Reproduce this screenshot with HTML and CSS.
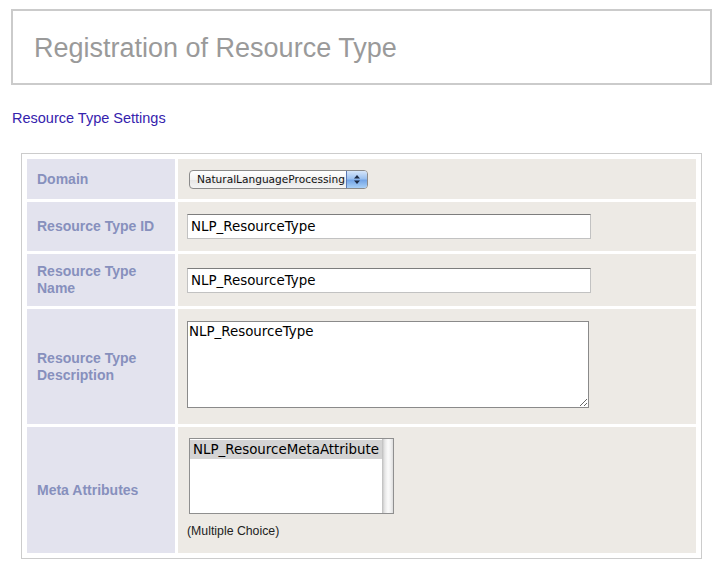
FILE: index.html
```html
<!DOCTYPE html>
<html lang="en">
<head>
<meta charset="utf-8">
<title>Registration of Resource Type</title>
<link rel="stylesheet" href="styles.css">
</head>
<body>
<div class="title-box">
  <h1 class="title">Registration of Resource Type</h1>
</div>
<h2 class="section">Resource Type Settings</h2>
<table class="form-table">
  <colgroup><col class="col-label"><col class="col-value"></colgroup>
  <tr class="row-domain">
    <th class="label">Domain</th>
    <td class="value">
      <div class="popup">
        <span class="popup-text">NaturalLanguageProcessing</span>
        <span class="popup-btn">
          <svg width="8" height="11" viewBox="0 0 8 11"><path d="M4 1 L7 4.5 H1 Z" fill="#1c2a44"/><path d="M4 10 L7 6.5 H1 Z" fill="#1c2a44"/></svg>
        </span>
      </div>
    </td>
  </tr>
  <tr class="row-id">
    <th class="label">Resource Type ID</th>
    <td class="value"><input class="text-input" type="text" value="NLP_ResourceType"></td>
  </tr>
  <tr class="row-name">
    <th class="label">Resource Type Name</th>
    <td class="value"><input class="text-input" type="text" value="NLP_ResourceType"></td>
  </tr>
  <tr class="row-desc">
    <th class="label">Resource Type Description</th>
    <td class="value"><textarea class="text-area">NLP_ResourceType</textarea></td>
  </tr>
  <tr class="row-meta">
    <th class="label">Meta Attributes</th>
    <td class="value">
      <div class="listbox" role="listbox">
        <div class="list-items">
          <div class="list-option selected" role="option">NLP_ResourceMetaAttribute</div>
        </div>
        <div class="list-scroll"></div>
      </div>
      <div class="hint">(Multiple Choice)</div>
    </td>
  </tr>
</table>
</body>
</html>
```
FILE: styles.css
```css
html, body {
  margin: 0;
  padding: 0;
  background: #ffffff;
}

body {
  font-family: "Liberation Sans", Arial, sans-serif;
  width: 720px;
}

.title-box {
  margin: 9px 8px 0 11px;
  height: 72px;
  border: 2px solid #cbcbcb;
  display: flex;
  align-items: center;
}

.title {
  margin: 0 0 0 21px;
  font-size: 27px;
  font-weight: normal;
  color: #9a9a9a;
  line-height: 31px;
  padding-top: 3px;
}

.section {
  margin: 25px 0 0 12px;
  font-size: 14.5px;
  line-height: 17px;
  font-weight: normal;
  color: #3522ad;
}

.form-table {
  margin: 26px 0 0 21px;
  width: 681px;
  table-layout: fixed;
  border: 1px solid #cccccc;
  padding: 2px;
  border-spacing: 3px;
}

.col-label { width: 148px; }
.col-value { width: 518px; }

.label {
  background: #e3e3ee;
  color: #8790bd;
  font-size: 14px;
  font-weight: bold;
  line-height: 17px;
  text-align: left;
  vertical-align: middle;
  padding: 0 10px 0 10px;
}

.value {
  background: #edeae5;
  vertical-align: middle;
  padding: 0 9px;
}

.row-domain th, .row-domain td { height: 40px; }
.row-id th, .row-id td { height: 49px; }
.row-name th, .row-name td { height: 52px; }
.row-desc th, .row-desc td { height: 115px; }
.row-meta th, .row-meta td { height: 126px; }

.popup {
  display: flex;
  align-items: stretch;
  margin-left: 2px;
  width: 179px;
  height: 19px;
  box-sizing: border-box;
  border: 1px solid #8b8b8b;
  border-radius: 4px;
  overflow: hidden;
  background: linear-gradient(#ffffff, #f3f3f3 50%, #e6e6e6 51%, #f4f4f4);
}

.popup-text {
  flex: 1;
  font-family: "DejaVu Sans", sans-serif;
  font-size: 10.6px;
  line-height: 17px;
  color: #111;
  padding-left: 7px;
  white-space: nowrap;
}

.popup-btn {
  width: 20px;
  border-left: 1px solid #5c79b4;
  display: flex;
  align-items: center;
  justify-content: center;
  background: linear-gradient(#d6e6fa, #9cc1ef 45%, #74a5e6 55%, #a9d0f7);
}

.text-input {
  display: block;
  box-sizing: border-box;
  width: 404px;
  height: 25px;
  margin: 0;
  padding: 0 3px;
  border: 1px solid #c2c2c2;
  border-top-color: #7d7d7d;
  background: #fff;
  font-family: "DejaVu Sans", sans-serif;
  font-size: 13.4px;
  color: #000;
  outline: none;
}

.text-area {
  display: block;
  box-sizing: border-box;
  width: 402px;
  height: 87px;
  margin: 0 0 4px 0;
  padding: 2px 1px;
  border: 1px solid #8a8a8a;
  background: #fff;
  font-family: "DejaVu Sans", sans-serif;
  font-size: 13.4px;
  line-height: 16px;
  color: #000;
  resize: both;
  outline: none;
}

.listbox {
  display: flex;
  box-sizing: border-box;
  width: 205px;
  height: 76px;
  margin-left: 2px;
  border: 1px solid #8f8f8f;
  background: #fff;
}

.list-items {
  flex: 1;
  padding-top: 1px;
}

.list-option {
  height: 19px;
  line-height: 19px;
  padding-left: 3px;
  font-family: "DejaVu Sans", sans-serif;
  font-size: 13.4px;
  color: #000;
  white-space: nowrap;
  overflow: hidden;
}

.list-option.selected {
  background: #d4d4d4;
}

.list-scroll {
  width: 11px;
  background: linear-gradient(to right, #bdbdbd, #e6e6e6 25%, #fbfbfb 55%, #f0f0f0 80%, #dcdcdc);
}

.hint {
  margin-top: 9px;
  padding-bottom: 2px;
  font-size: 12.3px;
  line-height: 17px;
  color: #222;
}
```
